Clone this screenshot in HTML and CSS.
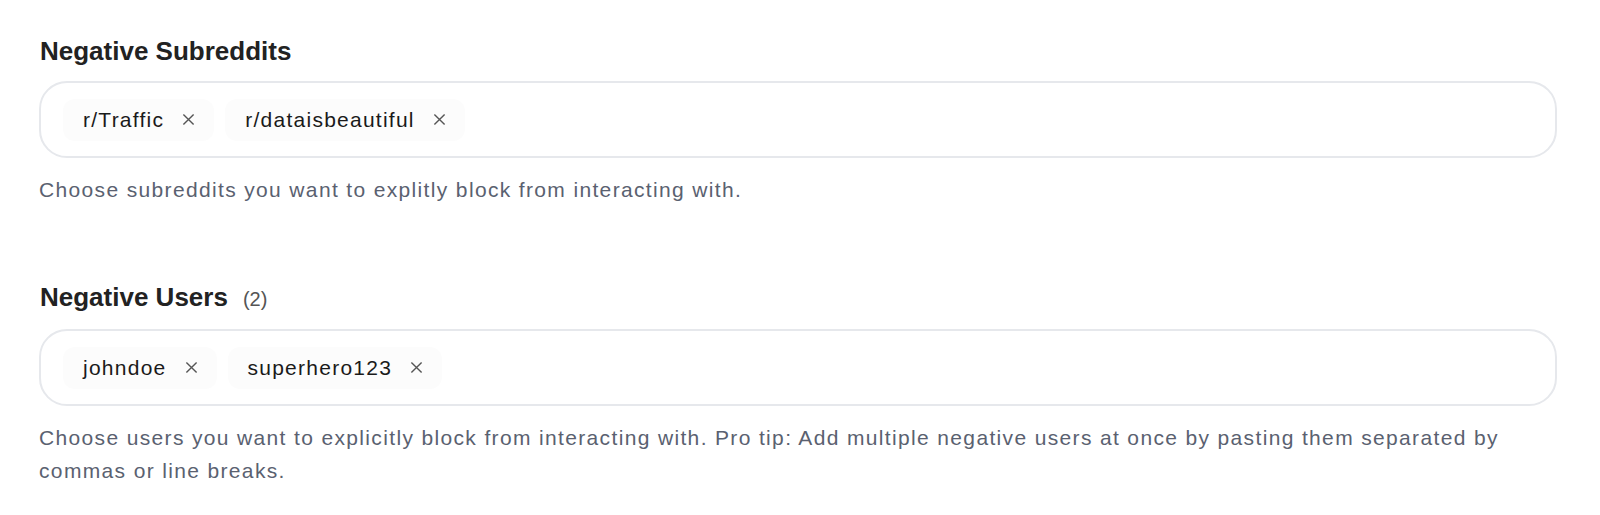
FILE: index.html
```html
<!DOCTYPE html>
<html lang="en">
<head>
  <meta charset="UTF-8">
  <title>Negative filters</title>
  <link rel="stylesheet" href="styles.css">
</head>
<body>
  <div class="settings">
    <!-- Negative subreddits -->
    <div class="field">
      <h3 class="field-title">Negative Subreddits</h3>
      <div class="tag-input">
        <span class="tag">r/Traffic
          <button class="tag-remove" aria-label="Remove"><svg viewBox="0 0 14 14"><path d="M1.5 1.5 L12.5 12.5 M12.5 1.5 L1.5 12.5"/></svg></button>
        </span>
        <span class="tag">r/dataisbeautiful
          <button class="tag-remove" aria-label="Remove"><svg viewBox="0 0 14 14"><path d="M1.5 1.5 L12.5 12.5 M12.5 1.5 L1.5 12.5"/></svg></button>
        </span>
      </div>
      <p class="field-help">Choose subreddits you want to explitly block from interacting with.</p>
    </div>

    <!-- Negative users -->
    <div class="field">
      <h3 class="field-title">Negative Users<span class="count">(2)</span></h3>
      <div class="tag-input">
        <span class="tag">johndoe
          <button class="tag-remove" aria-label="Remove"><svg viewBox="0 0 14 14"><path d="M1.5 1.5 L12.5 12.5 M12.5 1.5 L1.5 12.5"/></svg></button>
        </span>
        <span class="tag">superhero123
          <button class="tag-remove" aria-label="Remove"><svg viewBox="0 0 14 14"><path d="M1.5 1.5 L12.5 12.5 M12.5 1.5 L1.5 12.5"/></svg></button>
        </span>
      </div>
      <p class="field-help">Choose users you want to explicitly block from interacting with. Pro tip: Add multiple negative users at once by pasting them separated by commas or line breaks.</p>
    </div>
  </div>
</body>
</html>
```

FILE: styles.css
```css
body {
  margin: 0;
  background: #fff;
  font-family: "Liberation Sans", Arial, sans-serif;
  color: #1f1f1f;
}
.settings {
  padding: 36px 43px 0 39px;
  display: flex;
  flex-direction: column;
  gap: 76px;
}
.field-title {
  margin: 0 0 15px 1px;
  font-size: 26px;
  font-weight: bold;
  line-height: 30px;
  color: #222;
}
.count {
  font-weight: normal;
  font-size: 20px;
  color: #555;
  margin-left: 15px;
}
.tag-input {
  display: flex;
  align-items: center;
  gap: 11px;
  height: 73px;
  padding: 0 22px;
  border: 2px solid #e6e8ec;
  border-radius: 28px;
}
.tag {
  display: inline-flex;
  align-items: center;
  gap: 18px;
  height: 42px;
  padding: 0 19px 0 20px;
  background: #fcfcfc;
  border-radius: 12px;
  font-size: 21px;
  letter-spacing: 1.25px;
  color: #1a1a1a;
}
.tag-remove {
  border: 0;
  background: none;
  padding: 0;
  width: 13px;
  height: 13px;
  display: flex;
  cursor: pointer;
}
.tag-remove svg {
  width: 13px;
  height: 13px;
  stroke: #555;
  stroke-width: 1.5;
  fill: none;
}
.field-help {
  margin: 15px 0 0;
  font-size: 21px;
  line-height: 33px;
  letter-spacing: 1.35px;
  color: #5a6170;
}
```
